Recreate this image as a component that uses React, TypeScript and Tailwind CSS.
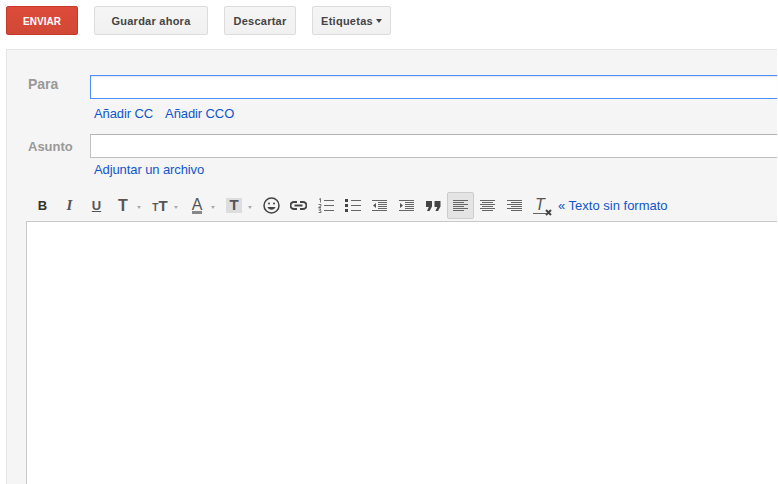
import type { ReactNode } from "react";

const FONT = "font-['Liberation_Sans',Arial,sans-serif]";

function ActionButton({ children, width }: { children: ReactNode; width: string }) {
  return (
    <button className={`flex h-[29px] ${width} items-center justify-center rounded-[2px] border border-[#dcdcdc] bg-gradient-to-b from-[#f5f5f5] to-[#f1f1f1] pt-px text-[11px] font-bold tracking-[0.25px] text-[#444]`}>
      {children}
    </button>
  );
}

function Tool({ children, active }: { children: ReactNode; active?: boolean }) {
  return (
    <div
      className={`flex h-[27px] w-[27px] items-center justify-center ${
        active ? "rounded-[2px] border border-[#ccc] bg-[#e4e4e4]" : ""
      }`}
    >
      {children}
    </div>
  );
}

function CaretTool({ children }: { children: ReactNode }) {
  return (
    <div className="flex h-[27px] w-[37px] items-center pl-[4px]">
      <div className="flex w-[18px] justify-center">{children}</div>
      <span className="ml-[4.5px] mt-[3px] h-0 w-0 border-x-[2.5px] border-t-[3px] border-x-transparent border-t-[#aaa]" />
    </div>
  );
}

function Lines({ rows }: { rows: [number, number][] }) {
  return (
    <svg width="15" height="13" viewBox="0 0 15 13" fill="none" stroke="#666" strokeWidth="1">
      {rows.map(([a, b], i) => (
        <line key={i} x1={a} x2={b} y1={1.5 + i * 2} y2={1.5 + i * 2} />
      ))}
    </svg>
  );
}

function ListIcon({ ordered }: { ordered?: boolean }) {
  return (
    <svg width="16" height="15" viewBox="0 0 16 15" fill="none" stroke="#666" strokeWidth="1">
      <line x1="6" x2="16" y1="2.5" y2="2.5" />
      <line x1="6" x2="16" y1="7.5" y2="7.5" />
      <line x1="6" x2="16" y1="12.5" y2="12.5" />
      {ordered ? (
        <path d="M1 1.5 2.5 .5V4.5M.5 6.5H3V8L.5 9.500H3M.5 11H3L1.500 12.500 3 13V14.500H.5" strokeWidth="0.9" />
      ) : (
        <g fill="#444" stroke="none">
          <rect x="0" y="1" width="3" height="3" />
          <rect x="0" y="6" width="3" height="3" />
          <rect x="0" y="11" width="3" height="3" />
        </g>
      )}
    </svg>
  );
}

function IndentIcon({ out }: { out?: boolean }) {
  return (
    <svg width="15" height="13" viewBox="0 0 15 13" fill="none" stroke="#666" strokeWidth="1">
      <line x1="0" x2="15" y1="1.500" y2="1.500" />
      <line x1="6" x2="15" y1="3.500" y2="3.500" />
      <line x1="6" x2="15" y1="5.500" y2="5.500" />
      <line x1="6" x2="15" y1="7.500" y2="7.500" />
      <line x1="6" x2="15" y1="9.500" y2="9.500" />
      <line x1="0" x2="15" y1="11.500" y2="11.500" />
      <path d={out ? "M1 4V9L4 6.500Z" : "M4 4V9L1 6.500Z"} fill="#555" stroke="none" />
    </svg>
  );
}

export default function App() {
  return (
    <div className={`flex h-[484px] w-[778px] flex-col overflow-hidden bg-white ${FONT}`}>
      <div className="flex h-[49px] shrink-0 items-start gap-4 pl-[6px] pt-[6px]">
        <button className="flex h-[29px] w-[72px] items-center justify-center rounded-[2px] border border-[#c6392a] bg-gradient-to-b from-[#dd4b39] to-[#d14836] pt-px text-[10px] font-bold text-white">
          ENVIAR
        </button>
        <ActionButton width="w-[114px]">Guardar ahora</ActionButton>
        <ActionButton width="w-[72px]">Descartar</ActionButton>
        <ActionButton width="w-[79px]">
          Etiquetas
          <span className="ml-[3px] h-0 w-0 border-x-[3.5px] border-t-[4px] border-x-transparent border-t-[#444]" />
        </ActionButton>
      </div>

      <div className="ml-[6px] mr-px flex min-h-0 flex-1 flex-col border-l border-t border-[#e5e5e5] bg-[#f5f5f5] pl-[19px]">
        <div className="ml-[2px] flex h-[49px] items-end">
          <label className="w-[62px] pb-[4px] text-[14px] font-bold text-[#999]">Para</label>
          <div className="h-[24px] flex-1 border border-r-0 border-[#4d90fe] bg-white shadow-[inset_0_1px_1px_rgba(0,0,0,0.1)]" />
        </div>
        <div className="ml-[68px] flex h-[28px] items-center gap-3 text-[13px] leading-none tracking-[-0.1px] text-[#15c]">
          <a>Añadir CC</a>
          <a>Añadir CCO</a>
        </div>
        <div className="ml-[2px] mt-[7px] flex h-[24px]">
          <label className="flex w-[62px] items-center pt-px text-[13px] font-bold text-[#999]">Asunto</label>
          <div className="flex-1 border border-r-0 border-[#c0c0c0] border-t-[#b4b4b4] bg-white" />
        </div>
        <div className="ml-[68px] flex h-[22px] items-center text-[13px] leading-none tracking-[-0.1px] text-[#15c]">
          <a>Adjuntar un archivo</a>
        </div>

        <div className="mt-[12px] flex h-[27px] items-center pl-[3px] text-[#444]">
          <Tool><b className="text-[13px] font-bold text-[#333]">B</b></Tool>
          <Tool><i className="font-['Liberation_Serif',serif] text-[15px] font-bold text-[#555]">I</i></Tool>
          <Tool><u className="text-[13px] font-bold leading-none text-[#555]">U</u></Tool>
          <CaretTool><span className="text-[16px] font-bold leading-none text-[#555]">T</span></CaretTool>
          <CaretTool><span className="flex items-baseline font-bold leading-none text-[#555]"><span className="text-[10px]">T</span><span className="text-[15px]">T</span></span></CaretTool>
          <CaretTool>
            <span className="border-b-[3px] border-[#888] text-[16px] leading-[13px] text-[#555]">A</span>
          </CaretTool>
          <CaretTool>
            <span className="flex h-[15px] w-[16px] items-center justify-center bg-[#ddd] text-[15px] font-bold text-[#555]">T</span>
          </CaretTool>
          <Tool>
            <svg width="17" height="17" viewBox="0 0 17 17" fill="none" stroke="#444" strokeWidth="1.500">
              <circle cx="8.500" cy="8.500" r="7.500" />
              <circle cx="6" cy="6.500" r="1" fill="#444" stroke="none" />
              <circle cx="11" cy="6.500" r="1" fill="#444" stroke="none" />
              <path d="M4.500 10C5.500 13.500 11.500 13.500 12.500 10Z" fill="#444" stroke="none" />
            </svg>
          </Tool>
          <Tool>
            <svg width="17" height="9" viewBox="0 0 17 9" fill="none" stroke="#444" strokeWidth="2">
              <path d="M7 1H4A3.500 3.500 0 0 0 4 8H7M10 1H13A3.500 3.500 0 0 1 13 8H10M4.500 4.500H12.500" />
            </svg>
          </Tool>
          <Tool><ListIcon ordered /></Tool>
          <Tool><ListIcon /></Tool>
          <Tool><IndentIcon /></Tool>
          <Tool><IndentIcon out /></Tool>
          <Tool>
            <svg width="15" height="10" viewBox="0 0 15 10" fill="#444">
              <path d="M0 0H6V5.500L3.500 10H1L2.800 6H0ZM8.500 0H14.500V5.500L12 10H9.500L11.300 6H8.500Z" />
            </svg>
          </Tool>
          <Tool active><Lines rows={[[0, 15], [0, 11], [0, 15], [0, 11], [0, 15], [0, 11]]} /></Tool>
          <Tool><Lines rows={[[0, 15], [2, 13], [0, 15], [2, 13], [0, 15], [2, 13]]} /></Tool>
          <Tool><Lines rows={[[0, 15], [4, 15], [0, 15], [4, 15], [0, 15], [4, 15]]} /></Tool>
          <Tool>
            <span className="relative block h-[17px] w-[13px] -translate-x-[2px] border-b border-[#666]">
              <i className="absolute left-[2px] top-[-1px] text-[16px] leading-[17px] text-[#555]">T</i>
              <svg className="absolute bottom-[-3px] right-[-6px]" width="7" height="7" viewBox="0 0 7 7" stroke="#444" strokeWidth="2">
                <path d="M1 1 6 6M6 1 1 6" />
              </svg>
            </span>
          </Tool>
          <a className="ml-[3px] text-[13px] leading-none text-[#15c]">« Texto sin formato</a>
        </div>

        <div className="mt-[2px] min-h-0 flex-1 border-l border-t border-[#c8c8c8] bg-white" />
      </div>
    </div>
  );
}
